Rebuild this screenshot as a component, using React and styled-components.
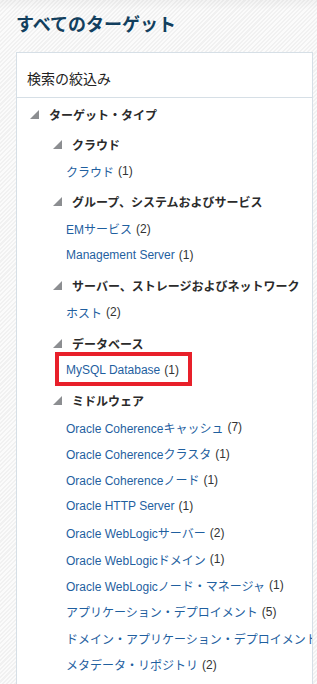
import React from "react";
import styled, { createGlobalStyle } from "styled-components";

const Global = createGlobalStyle`
  html, body { margin: 0; padding: 0; }
  body {
    font-family: "Liberation Sans", "Noto Sans CJK JP", sans-serif;
    background-color: #f6f6f6;
    background-image:
      linear-gradient(to bottom, rgba(0,0,0,0.035), rgba(0,0,0,0) 10px),
      repeating-linear-gradient(135deg, #fbfbfb 0px, #fbfbfb 1.5px, #f1f1f1 1.5px, #f1f1f1 3px);
    height: 684px;
    overflow: hidden;
  }
`;

const Page = styled.div`
  padding: 12px 4px 0 16px;
  display: flex;
  flex-direction: column;
`;

const Title = styled.h1`
  margin: 0;
  height: 40px;
  font-size: 18px;
  line-height: 26px;
  font-weight: bold;
  color: #123f5e;
  font-family: "Liberation Sans", "Noto Sans CJK JP", sans-serif;
`;

const Panel = styled.section`
  width: 295px;
  background: #fff;
  border: 1px solid #d6dfe6;
  border-bottom: none;
  height: 640px;
  overflow: hidden;
`;

const PanelHeader = styled.div`
  height: 45px;
  box-sizing: border-box;
  padding: 18px 0 11px 10px;
  font-size: 14px;
  line-height: 16px;
  color: #222;
  border-bottom: 1px solid #d6dfe6;
`;

const Tree = styled.div`
  padding-top: 3px;
  display: flex;
  flex-direction: column;
`;

const Group = styled.div`
  margin-top: 4px;
  display: flex;
  flex-direction: column;
`;

const NodeRow = styled.div`
  display: flex;
  align-items: center;
  height: ${(p) => (p.$level === 1 ? 26 : 27)}px;
  padding-left: ${(p) => (p.$level === 1 ? 13 : 36)}px;
  gap: 10px;
  font-size: 12px;
  font-weight: bold;
  color: #2b2b2b;
  white-space: nowrap;
`;

const LinkRow = styled.div`
  position: relative;
  display: flex;
  align-items: center;
  height: 26.4px;
  padding-left: 49px;
  font-size: 12px;
  white-space: nowrap;
`;

const LinkText = styled.a`
  color: #1f5f9f;
  text-decoration: none;
`;

const Count = styled.span`
  color: #333;
  margin-left: 4px;
`;

const Highlight = styled.div`
  position: absolute;
  left: 38px;
  top: -5px;
  width: 137px;
  height: 34px;
  box-sizing: border-box;
  border: 4px solid #e8202a;
  pointer-events: none;
`;

const Tri = () => (
  <svg width="9" height="9" viewBox="0 0 9 9" style={{ flex: "none" }}>
    <polygon points="9,0 9,9 0,9" fill="#8c8e91" />
  </svg>
);

const groups = [
  { name: "クラウド", items: [["クラウド", 1]] },
  {
    name: "グループ、システムおよびサービス",
    items: [
      ["EMサービス", 2],
      ["Management Server", 1],
    ],
  },
  { name: "サーバー、ストレージおよびネットワーク", items: [["ホスト", 2]] },
  { name: "データベース", items: [["MySQL Database", 1, true]] },
  {
    name: "ミドルウェア",
    items: [
      ["Oracle Coherenceキャッシュ", 7],
      ["Oracle Coherenceクラスタ", 1],
      ["Oracle Coherenceノード", 1],
      ["Oracle HTTP Server", 1],
      ["Oracle WebLogicサーバー", 2],
      ["Oracle WebLogicドメイン", 1],
      ["Oracle WebLogicノード・マネージャ", 1],
      ["アプリケーション・デプロイメント", 5],
      ["ドメイン・アプリケーション・デプロイメント", 3],
      ["メタデータ・リポジトリ", 2],
    ],
  },
];

export default function App() {
  return (
    <>
      <Global />
      <Page>
        <Title>すべてのターゲット</Title>
        <Panel>
          <PanelHeader>検索の絞込み</PanelHeader>
          <Tree>
            <NodeRow $level={1}>
              <Tri />
              ターゲット・タイプ
            </NodeRow>
            {groups.map((g) => (
              <Group key={g.name}>
                <NodeRow $level={2}>
                  <Tri />
                  {g.name}
                </NodeRow>
                {g.items.map(([label, n, hl]) => (
                  <LinkRow key={label}>
                    <LinkText href="#">{label}</LinkText>
                    <Count>({n})</Count>
                    {hl && <Highlight />}
                  </LinkRow>
                ))}
              </Group>
            ))}
          </Tree>
        </Panel>
      </Page>
    </>
  );
}
